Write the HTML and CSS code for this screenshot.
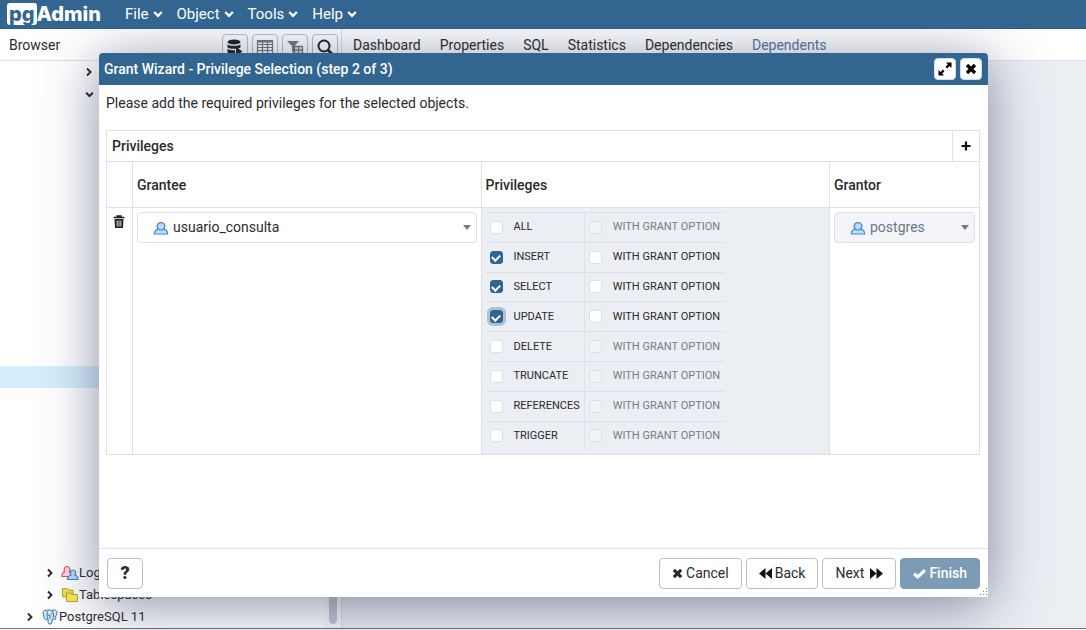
FILE: index.html
```html
<!DOCTYPE html>
<html lang="en">
<head>
<meta charset="utf-8">
<title>pgAdmin</title>
<link rel="stylesheet" href="styles.css">
</head>
<body>
<svg class="defs" aria-hidden="true">
  <symbol id="down" viewBox="0 0 10 8"><path d="M1.200 2 5 5.800 8.800 2" fill="none" stroke="currentColor" stroke-width="2.300"/></symbol>
  <symbol id="right" viewBox="0 0 8 10"><path d="M2 1.500 5.500 5 2 8.500" fill="none" stroke="currentColor" stroke-width="1.900"/></symbol>
  <symbol id="times" viewBox="0 0 12 12"><path d="M2 2 10 10M10 2 2 10" stroke="currentColor" stroke-width="3.400"/></symbol>
  <symbol id="user" viewBox="0 0 16 14"><path d="M5.800 8.200C4.300 7.300 3.800 5.500 4.500 3.800 5 2.300 6.300 1.600 8 1.600s3 .7 3.500 2.200c.7 1.700.2 3.500-1.300 4.400 2.800.2 4.300 1.800 4.500 4.800H1.300c.2-3 1.700-4.600 4.500-4.800z" fill="#b9dcf8" stroke="#4a86cf" stroke-width="1.200"/><path d="M5.500 8.200c1.500 1.200 3.500 1.200 5 0" fill="none" stroke="#4a86cf"/></symbol>
  <symbol id="tick" viewBox="0 0 12 10"><path d="M1 5.200 4.400 8.200 11 2" fill="none" stroke="currentColor" stroke-width="2.900"/></symbol>
</svg>

<header class="navbar">
  <a class="logo" href="#"><span class="logo-pg">pg</span><span class="logo-admin">Admin</span></a>
  <nav class="menus">
    <button class="menu">File <svg class="caret"><use href="#down"/></svg></button>
    <button class="menu">Object <svg class="caret"><use href="#down"/></svg></button>
    <button class="menu">Tools <svg class="caret"><use href="#down"/></svg></button>
    <button class="menu">Help <svg class="caret"><use href="#down"/></svg></button>
  </nav>
</header>

<main class="workspace">
  <section class="browser">
    <div class="panel-head">
      <span class="panel-title">Browser</span>
      <div class="tools">
        <button class="tool" aria-label="Query tool"><svg viewBox="0 0 18 18"><ellipse cx="8" cy="4" rx="6.500" ry="2.500" fill="#222"/><path d="M1.500 6.200c2 2 11 2 13 0v3c-2 2-11 2-13 0zM1.500 10.800c2 1.500 5 1.600 7.500 1.200v4c-3 .4-6 0-7.500-1.500zM10 9l6.500 4.500L10 18z" fill="#222"/></svg></button>
        <button class="tool" aria-label="View data"><svg viewBox="0 0 18 18"><path d="M1.500 2.500h15v13h-15zM1.500 6.500h15M1.500 9.500h15M1.500 12.500h15M6.500 3v12.500M11.500 3v12.500" fill="none" stroke="#777" stroke-width="1.200"/><path d="M1.500 2h15v2.500h-15z" fill="#777"/></svg></button>
        <button class="tool" aria-label="Filtered rows"><svg viewBox="0 0 18 18"><path d="M1 3h12L8.500 8v8L6 13.500V8z" fill="#777"/><path d="M8.500 8.500h8v7h-8zM8.500 12h8M12.500 8.500v7" fill="#eee" stroke="#777" stroke-width="1.300"/></svg></button>
        <button class="tool" aria-label="Search objects"><svg viewBox="0 0 18 18"><circle cx="8" cy="8" r="5.500" fill="none" stroke="#222" stroke-width="2"/><path d="M12 12 16 16" stroke="#222" stroke-width="2.800"/></svg></button>
      </div>
    </div>
    <div class="tree-area">
      <div class="tree">
        <div class="row deep"><svg class="arrow"><use href="#right"/></svg></div>
        <div class="row deep"><svg class="arrow-down"><use href="#down"/></svg></div>
        <div class="gap-upper"></div>
        <div class="row selected"></div>
        <div class="gap-lower"></div>
        <div class="row group"><svg class="arrow"><use href="#right"/></svg><svg class="node" viewBox="0 0 18 16"><path d="M3.500 7C2.500 4 3.500 1.500 6 1.500S9.500 4 8.500 7L11 9v2.500H1C1 9 1.500 7.500 3.500 7z" fill="#fbdada" stroke="#db5555" stroke-width="1.200"/><path d="M10 10C8.500 7.500 9.500 5 12 5s3.500 2.500 2 5c2 .5 3 2 3 4.500H6.500C6.500 12 8 10.500 10 10z" fill="#b9dcf8" stroke="#3c7fce" stroke-width="1.200"/></svg><span>Login</span></div>
        <div class="row group"><svg class="arrow"><use href="#right"/></svg><svg class="node" viewBox="0 0 18 16"><path d="M1.500 1.500h4.500l1 1.500h5v7H1.500z" fill="#efdf45" stroke="#b9a521"/><path d="M5.500 6h4l1 1.500h6v7h-11z" fill="#f7ea5c" stroke="#b9a521"/></svg><span>Tablespaces</span></div>
        <div class="row server"><svg class="arrow"><use href="#right"/></svg><svg class="node" viewBox="0 0 18 18"><path d="M5 1.500C2 .8.800 3 1.500 6c.5 3 1.500 6 3 6.300 1 0 1.500-1.300 2-1.800l.5 5c.3 2 3.500 2 4 0l.5-4c1.500.8 4 0 4.500-1-1.500 0-1.500-.5-1.200-1C16.500 7 17.500 4 16.500 2.500c-1.500-1.800-4-1.500-5.500-.8C9.500 1 7 1 5 1.500z" fill="#d3e8f5" stroke="#34729c" stroke-width="1.100"/><path d="M6.500 2.500C5 5 5.500 8 6.500 10.500M11 2c2 2 2.500 5 1.500 8M6.500 7h2.500v4M10 5.500h1.500" fill="none" stroke="#34729c" stroke-width="1.100"/></svg><span>PostgreSQL 11</span></div>
      </div>
      <div class="scroll"><div class="thumb"></div></div>
    </div>
  </section>
  <section class="content">
    <nav class="panel-head tabs">
      <a href="#">Dashboard</a><a href="#">Properties</a><a href="#">SQL</a><a href="#">Statistics</a><a href="#">Dependencies</a><a href="#" class="active">Dependents</a>
    </nav>
    <div class="content-body"></div>
  </section>
</main>

<div class="dialog" role="dialog" aria-labelledby="dialog-title">
  <div class="dialog-head">
    <h1 id="dialog-title">Grant Wizard - Privilege Selection (step 2 of 3)</h1>
    <button class="head-button" aria-label="Maximize"><svg viewBox="0 0 16 16"><path d="M9 1.500h5.500V7l-2-1.900-2.300 2.400-1.700-1.700 2.400-2.300zM7 14.500H1.500V9l2 1.900 2.300-2.400 1.700 1.700-2.400 2.300z" fill="#000"/></svg></button>
    <button class="head-button" aria-label="Close"><svg class="small"><use href="#times"/></svg></button>
  </div>
  <div class="dialog-body">
    <p class="hint">Please add the required privileges for the selected objects.</p>
    <div class="grid-head"><h2>Privileges</h2><button class="add" aria-label="Add"><svg viewBox="0 0 10 10"><path d="M5 0.500v9M.5 5h9" stroke="#111" stroke-width="2.200"/></svg></button></div>
    <table class="grants">
      <thead><tr><th class="col-delete"></th><th>Grantee</th><th>Privileges</th><th class="col-grantor">Grantor</th></tr></thead>
      <tbody><tr>
        <td class="delete-cell"><button class="delete" aria-label="Delete"><svg viewBox="0 0 12 14"><path d="M.5 2.500h11M4 2.500V1h4v1.500" fill="none" stroke="#222" stroke-width="1.400"/><path d="M1.500 4h9l-.5 9H2z" fill="#222"/><path d="M4.200 5.500v6M6 5.500v6M7.800 5.500v6" stroke="#fff" stroke-width=".8"/></svg></button></td>
        <td><div class="picker"><svg class="user"><use href="#user"/></svg><select aria-label="Grantee"><option>usuario_consulta</option></select></div></td>
        <td class="priv-cell">
          <table class="privs">
            <tr><td><label><input type="checkbox">ALL</label></td><td><label class="off"><input type="checkbox" disabled>WITH GRANT OPTION</label></td></tr>
            <tr><td><label><input type="checkbox" checked>INSERT</label></td><td><label><input type="checkbox">WITH GRANT OPTION</label></td></tr>
            <tr><td><label><input type="checkbox" checked>SELECT</label></td><td><label><input type="checkbox">WITH GRANT OPTION</label></td></tr>
            <tr><td><label><input type="checkbox" class="focused" checked>UPDATE</label></td><td><label><input type="checkbox">WITH GRANT OPTION</label></td></tr>
            <tr><td><label><input type="checkbox">DELETE</label></td><td><label class="off"><input type="checkbox" disabled>WITH GRANT OPTION</label></td></tr>
            <tr><td><label><input type="checkbox">TRUNCATE</label></td><td><label class="off"><input type="checkbox" disabled>WITH GRANT OPTION</label></td></tr>
            <tr><td><label><input type="checkbox">REFERENCES</label></td><td><label class="off"><input type="checkbox" disabled>WITH GRANT OPTION</label></td></tr>
            <tr><td><label><input type="checkbox">TRIGGER</label></td><td><label class="off"><input type="checkbox" disabled>WITH GRANT OPTION</label></td></tr>
          </table>
        </td>
        <td><div class="picker disabled"><svg class="user"><use href="#user"/></svg><select aria-label="Grantor" disabled><option>postgres</option></select></div></td>
      </tr></tbody>
    </table>
  </div>
  <div class="dialog-foot">
    <button class="btn help" aria-label="Help">?</button>
    <button class="btn"><svg class="glyph"><use href="#times"/></svg>Cancel</button>
    <button class="btn"><svg class="double" viewBox="0 0 12 12"><path d="M6 1v10L0 6zM12 1v10L6 6z" fill="#111"/></svg>Back</button>
    <button class="btn next">Next<svg class="double" viewBox="0 0 12 12"><path d="M0 1v10l6-5zM6 1v10l6-5z" fill="#111"/></svg></button>
    <button class="btn finish" disabled><svg class="check"><use href="#tick"/></svg>Finish</button>
  </div>
  <svg class="grip" viewBox="0 0 8 8"><path d="M7 0h1v1H7zM7 3h1v1H7zM7 6h1v1H7zM4 3h1v1H4zM4 6h1v1H4zM1 6h1v1H1z" fill="#777"/></svg>
</div>
</body>
</html>
```
FILE: styles.css
```css
* { box-sizing: border-box; }
.defs { position: absolute; width: 0; height: 0; }
html { height: 100%; }
body {
  margin: 0; height: 100%; display: flex; flex-direction: column;
  font-family: Roboto, "Liberation Sans", sans-serif; font-size: 14px; line-height: 20px;
  color: #2b2b2b; background: #fff; overflow: hidden; position: relative;
}
button, select, input { font: inherit; color: inherit; margin: 0; }
a { color: inherit; text-decoration: none; }

.navbar {
  position: relative; z-index: 2; flex: none; height: 29px; padding: 0 7px;
  display: flex; align-items: center; gap: 24px;
  background: #326690; color: #fff; border-bottom: 1px solid #2c5f88;
}
.logo { display: flex; align-items: center; font-family: Inter, sans-serif; font-size: 20px; font-weight: 800; line-height: 22px; }
.logo-pg { background: #fff; color: #326690; border-radius: 3px; padding: 0 2px; }
.menus { display: flex; gap: 14px; }
.menu { display: flex; align-items: center; gap: 4px; padding: 0; border: 0; background: none; font-size: 15px; }
.caret { width: 10px; height: 8px; }

.workspace { flex: 1; display: flex; min-height: 0; margin-bottom: 1px; border-bottom: 1px solid #6f7277; }
.browser { flex: none; width: 342px; display: flex; flex-direction: column; border-right: 1px solid #dde0e6; }
.content { flex: 1; display: flex; flex-direction: column; }
.panel-head { flex: none; height: 32px; display: flex; align-items: center; border-bottom: 1px solid #dde0e6; background: #fff; }
.panel-title { padding-left: 9px; flex: 1; }
.tools { display: flex; gap: 4px; padding-right: 3px; padding-top: 4px; }
.tool { width: 26px; height: 26px; padding: 3px; border: 1px solid #bac1cd; border-radius: 4px; background: #fff; }
.tool svg { display: block; width: 18px; height: 18px; }
.tabs { padding-left: 11px; gap: 19px; }
.active { color: #56779b; }
.content-body { flex: 1; background: #ebeef3; }

.tree-area { flex: 1; display: flex; min-height: 0; font-size: 13px; }
.tree { flex: 1; display: flex; flex-direction: column; }
.row { flex: none; height: 22px; display: flex; align-items: center; white-space: nowrap; }
.gap-upper { flex: 3; }
.gap-lower { flex: 2; }
.deep { padding-left: 85px; }
.group { padding-left: 46px; }
.server { padding-left: 26px; }
.selected { background: #d6effc; }
.arrow { width: 8px; height: 10px; }
.arrow-down { width: 9px; height: 7px; }
.node { width: 18px; height: 16px; margin-left: 7px; }
.scroll { width: 16px; padding: 4px; display: flex; background: #fafafb; }
.thumb { flex: 1; border-radius: 4px; background: #c3c7cf; }

.dialog {
  position: absolute; top: 53px; right: 98px; bottom: 33px; left: 99px; z-index: 1;
  display: flex; flex-direction: column; background: #fff; border-radius: 4px 4px 0 0;
  box-shadow: 0 8px 56px rgba(40, 50, 90, .55);
}
.dialog-head { flex: none; height: 32px; display: flex; align-items: center; gap: 4px; padding: 0 6px 0 5px; background: #326690; color: #fff; border-radius: 4px 4px 0 0; }
.dialog-head h1 { flex: 1; margin: 0; font-size: 14px; font-weight: 500; }
.head-button { display: flex; align-items: center; justify-content: center; width: 22px; height: 22px; padding: 0; border: 1px solid #d5dde6; border-radius: 4px; background: #fff; color: #000; }
.head-button svg { width: 16px; height: 16px; }
.head-button .small { width: 12px; height: 12px; }

.dialog-body { flex: 1; padding: 8px 8px 0 7px; min-height: 0; }
.hint { margin: 0 0 17px; }
.grid-head { display: flex; height: 31px; border: 1px solid #dde0e6; border-bottom: 0; }
.grid-head h2 { flex: 1; margin: 0; padding: 5px; font-size: 14px; font-weight: 500; }
.add { width: 27px; padding: 0; border: 0; border-left: 1px solid #dde0e6; background: #fff; }
.add svg { width: 10px; height: 10px; }
.grants { width: 100%; table-layout: fixed; border-collapse: collapse; }
.grants th, .grants td { border: 1px solid #dde0e6; }
.grants th { height: 46px; padding: 0 4px; text-align: left; font-weight: 500; }
.grants td { padding: 4px; vertical-align: top; }
.col-delete { width: 26px; }
.col-grantor { width: 150px; }
.grants .delete-cell { padding: 7px 6px; }
.delete { display: block; padding: 0; border: 0; background: none; }
.delete svg { display: block; width: 12px; height: 14px; }
.picker { position: relative; }
.user { position: absolute; left: 16px; top: 9px; width: 16px; height: 14px; pointer-events: none; }
.picker select {
  appearance: none; display: block; width: 100%; height: 31px; padding: 0 20px 1px 35px;
  border: 1px solid #dde0e6; border-radius: 4px; background: #fff; opacity: 1;
}
.picker::after { content: ""; position: absolute; right: 6px; top: 13px; border: 4px solid transparent; border-top: 5px solid #777; border-bottom: 0; }
.disabled select { background: #f3f5f9; color: #6b7787; }

.grants .priv-cell { background: #ebeef3; }
.privs { height: 238px; border-collapse: collapse; font-size: 11px; line-height: 16px; }
.grants .privs td { padding: 0 4px; border: 0; border-top: 1px solid #dde0e6; vertical-align: middle; }
.grants .privs td + td { border-left: 1px solid #dde0e6; }
.privs label { display: flex; align-items: center; gap: 11px; }
.privs .off { color: #777d86; }
.privs input { appearance: none; width: 13px; height: 13px; border: 1px solid #dde0e6; border-radius: 3px; background: #fff; display: grid; place-items: center; }
.privs input:disabled { background: #f1f3f7; }
.privs input:checked { background: #326690; border-color: #326690; }
.privs input:checked::after { content: ""; width: 6px; height: 4px; border: solid #fff; border-width: 0 0 2px 2px; transform: rotate(-45deg); }
.privs .focused { box-shadow: 0 0 0 3px #adc2d3; }

.dialog-foot { flex: none; height: 49px; display: flex; align-items: center; gap: 4px; padding: 0 8px; border-top: 1px solid #dde0e6; }
.btn { display: flex; align-items: center; justify-content: center; gap: 3px; height: 31px; padding: 0 12px; border: 1px solid #bac1cd; border-radius: 4px; background: #fff; }
.help { width: 36px; margin-right: auto; font-size: 18px; font-weight: 900; }
.glyph { width: 11px; height: 11px; }
.double { width: 13px; height: 13px; }
.next { gap: 6px; }
.check { width: 13px; height: 11px; }
.finish { background: #7b9bb6; border-color: #7b9bb6; color: #fff; font-weight: 500; }
.grip { position: absolute; right: 1px; bottom: 1px; width: 8px; height: 8px; }
```
